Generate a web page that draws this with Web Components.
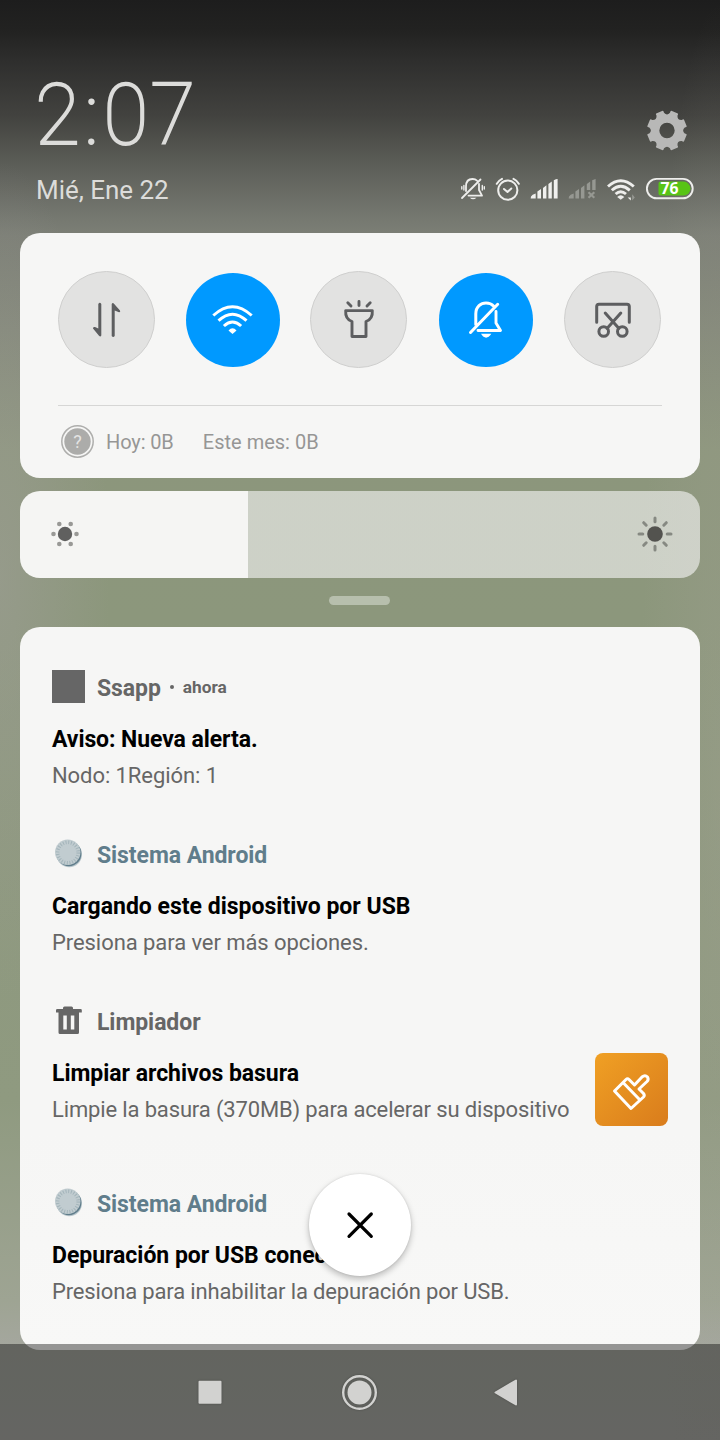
<!DOCTYPE html>
<html lang="es">
<head>
<meta charset="utf-8">
<title>Panel de notificaciones</title>
<style>
html,body{margin:0;padding:0;width:720px;height:1440px;overflow:hidden;font-family:Roboto,"Liberation Sans",sans-serif}
</style>
</head>
<body>
<phone-screen></phone-screen>
<script>
const define=(name,html)=>customElements.define(name,class extends HTMLElement{
  constructor(){super();const t=document.createElement('template');
    t.innerHTML='<style>*{box-sizing:border-box}svg{display:block;overflow:visible}</style>'+html;
    this.attachShadow({mode:'open'}).append(t.content.cloneNode(true));}
});

define('status-icons',`<style>:host{display:block;width:240px;height:28px}</style>
<svg width="240" height="28" viewBox="456 175 240 28" fill="none" stroke="#eeeeec" stroke-width="1.8" stroke-linecap="round" stroke-linejoin="round">
<path d="M462 198L480.500 179.500M466 191V186.500C466 181 469 179 472.500 179C474.500 179 476 179.600 477 180.600M479 184V190L482 195.600H468.500"/><path d="M469.800 197.700H476.500Q473 201 469.800 197.700Z" fill="#eeeeec" stroke="none"/>
<path d="M463.900 185.500V190M461.800 186.800V189M482.300 185.500V190M484.300 186.800V189" stroke-width="1.400"/>
<circle cx="507.800" cy="190.200" r="9.600" stroke-width="2"/><path d="M504 189L507.500 192L511.300 188.500" stroke-width="2"/><path d="M496.800 183.800Q499 180.200 502 178.800M513.500 178.800Q516.800 180.200 518.800 183.800" stroke-width="2"/>
<g stroke="none" fill="#f0f0ee"><path d="M531 196.500Q532 194.300 535.700 193.500V198.500H530.700ZM537.400 191.500L541 189V198.500H537.400ZM543 188L546.400 185.200V198.500H543ZM548.400 184L551.800 181.500V198.500H548.400ZM553.800 180.200Q556.500 178.800 557.600 179V198.500H553.800Z"/></g>
<g stroke="none" fill="#969892"><path d="M569 196.500Q570 194.300 573.700 193.500V198.500H568.700ZM575.400 191.500L579 189V198.500H575.400ZM581 188L584.400 185.200V198.500H581ZM586.800 184L590.200 181.500V190H586.800ZM592.200 180.200L595.600 179V190H592.200Z"/></g><path d="M588.500 192.300L594.300 197.800M594.300 192.300L588.500 197.800" stroke="#969892" stroke-width="2.200" stroke-linecap="butt"/>
<path d="M608 186.500Q620.700 174.800 633.800 186.500M611.800 190.300Q620.700 182.200 629.800 190.300M615.600 194Q620.700 189.300 626 194" stroke-width="2.900" stroke-linecap="butt"/><path d="M617.200 197Q620.700 193.500 624.300 197L620.700 199.800Z" fill="#eeeeec" stroke="none"/>
<path d="M630.800 194.300V200.500L627.700 197.500H630.800Z" fill="#eeeeec" stroke="none"/><path d="M632.200 194.300V200.500L634.800 197.500Z" fill="#969892" stroke="none"/>
<rect x="646.900" y="178.900" width="45.800" height="19.400" rx="9.700" stroke-width="1.900"/><path d="M660.500 181.600H683.500A6.900 6.900 0 0 1 683.500 195.500H660.500Q658.500 195.500 658.500 193.500V183.600Q658.500 181.600 660.500 181.600Z" fill="#58c416" stroke="none"/>
<text x="660.400" y="194.400" font-family="'Open Sans',sans-serif" font-size="16.500" font-weight="700" fill="#fff" stroke="none" textLength="18" lengthAdjust="spacingAndGlyphs">76</text>
</svg>`);

define('shade-header',`<style>:host{display:flex;justify-content:space-between;height:233px;padding:0 24px 0 36px;color:#dcdcda}
.l,.r{display:flex;flex-direction:column}.r{align-items:flex-end}
.time{margin:62px 0 0 -1px;height:106px;line-height:106px;font-size:86px;font-weight:100;white-space:nowrap;-webkit-text-stroke:2px #dcdcda;letter-spacing:2px;transform:scaleX(.957);transform-origin:left}
.time span{letter-spacing:4.500px}
.date{margin-top:7px;line-height:30px;font-size:26px;letter-spacing:-.03px;white-space:nowrap}
.gear{margin:110px 9.500px 0 0;height:65px}</style>
<div class="l"><div class="time"><span>2:</span>07</div><div class="date">Mié, Ene 22</div></div>
<div class="r"><div class="gear"><svg width="40" height="40" viewBox="-20 -20.500 40 40"><path id="g" fill="#b8b8b7" fill-rule="evenodd"/></svg></div><status-icons></status-icons></div>`);

define('quick-tile',`<style>:host{display:flex;flex:none;align-self:flex-start;width:97px;height:97px;border-radius:50%;background:#e2e2e1;border:1.500px solid #cfcfce;align-items:center;justify-content:center;color:#5d5e60}
:host([on]){background:#0099ff;border:0;width:94px;height:94px;align-self:center;color:#fff}</style><slot></slot>`);

define('tile-icon',`<style>:host{display:block;width:60px;height:60px}svg{display:none;fill:none;stroke:currentColor;stroke-width:3;stroke-linecap:round;stroke-linejoin:round}
:host([name=data]) .data,:host([name=wifi]) .wifi,:host([name=torch]) .torch,:host([name=mute]) .mute,:host([name=snip]) .snip{display:block}</style>
<svg class="data" width="60" height="60" viewBox="-30 -30 60 60"><path d="M-5.700 -16V15.500Q-6.500 17.200 -8 15.800L-14 8.500Q-14.300 6.500 -12 7L-8.700 8.500V-16Q-7.200 -18.500 -5.700 -16ZM4.700 16V-16Q5.700 -18 7.200 -16L13 -9.500Q13.800 -7.500 12 -7.700L7.700 -9.500V16Q6.200 18 4.700 16Z" fill="currentColor" stroke="none"/></svg>
<svg class="wifi" width="60" height="60" viewBox="-29.500 -30 60 60"><g style="stroke-linecap:butt;stroke-width:3"><path d="M-19.200 -4.500Q0 -22 19.200 -4.500M-14 .700Q0 -12.300 14 .700M-8.600 6Q0 -2 8.600 6"/></g><path d="M-4 10.500Q0 6 4 10.500L0 14Z" fill="currentColor" stroke="none"/></svg>
<svg class="torch" width="60" height="60" viewBox="-30 -30 60 60"><path d="M-13.300 -9.400H13.300Q14 -1 7 1.500V16.500H-7V1.500Q-14 -1 -13.300 -9.400ZM0 -18.500V-14.500M-11.200 -17.200L-8 -14M11.200 -17.200L8 -14" stroke-width="2.900"/></svg>
<svg class="mute" width="60" height="60" viewBox="-30 -30 60 60"><path d="M-15.500 12.500L11.700 -15.700M-10.200 4.500V-6C-10.200 -13.500 -5 -17 0 -17C3.500 -17 6 -15.700 7.500 -14"/><path d="M10 -8.500V3L14.500 10.500H-8" stroke-width="2.900"/><path d="M-5 13.800H5.300Q0 21.500 -5 13.800Z" fill="currentColor" stroke="none"/></svg>
<svg class="snip" width="60" height="60" viewBox="-30 -30 60 60"><path d="M-16.300 2.300V-13.500Q-16.300 -15.800 -14 -15.800H14Q16.300 -15.800 16.300 -13.500V2.300M-7.800 -7L6 8.500M7.800 -7L-6 8.500"/><circle cx="-9.300" cy="11.500" r="4.800"/><circle cx="9.300" cy="11.500" r="4.800"/></svg>`);

define('quick-panel',`<style>:host{display:block;height:245px;border-radius:20px;background:#f6f6f5;padding:38px 38px 0}
.tiles{display:flex;align-items:center;height:98px}
quick-tile{margin-right:31px}quick-tile:nth-child(2){margin-right:30px}quick-tile:nth-child(3){margin-right:32px}
.usage{display:flex;align-items:center;margin-top:36px;border-top:1px solid #d6d6d5;height:73px;font-size:20px;color:#969695;white-space:nowrap;padding-left:2px}
.q{margin:0 11px 2px 0}.h{margin-right:29.200px;letter-spacing:-.12px}</style>
<div class="tiles"><quick-tile><tile-icon name="data"></tile-icon></quick-tile><quick-tile on><tile-icon name="wifi"></tile-icon></quick-tile><quick-tile><tile-icon name="torch"></tile-icon></quick-tile><quick-tile on><tile-icon name="mute"></tile-icon></quick-tile><quick-tile><tile-icon name="snip"></tile-icon></quick-tile></div>
<div class="usage"><svg class="q" width="35" height="35" viewBox="0 0 35 35"><circle cx="17.500" cy="17.500" r="15.700" fill="none" stroke="#aeaeac" stroke-width="1.500"/><circle cx="17.500" cy="17.500" r="13.200" fill="#acacaa"/><text x="17.500" y="23.500" text-anchor="middle" font-size="18" font-weight="400" fill="#e4e4e3" font-family="Roboto,sans-serif">?</text></svg><span class="h">Hoy: 0B</span><span>Este mes: 0B</span></div>`);

define('brightness-slider',`<style>:host{display:flex;justify-content:space-between;align-items:center;height:87px;margin-top:13px;border-radius:20px;padding:0 27.500px 2px 29.700px;background:linear-gradient(90deg,#f5f5f3 228px,rgba(245,245,245,.62) 228px)}</style>
<svg width="30" height="30" viewBox="-15 -15 30 30"><circle r="7.200" fill="#60605f"/><g fill="#999996"><circle cx="-11.500" r="2.300"/><circle cx="11.500" r="2.300"/><circle cx="-5.700" cy="-10" r="2.300"/><circle cx="5.700" cy="-10" r="2.300"/><circle cx="-5.700" cy="10" r="2.300"/><circle cx="5.700" cy="10" r="2.300"/></g></svg>
<svg width="36" height="36" viewBox="-18 -18 36 36"><circle r="7.800" fill="#53534f"/><path d="M0-16V-12.200M0 12.200V16M-16 0H-12.200M12.200 0H16M-11.300-11.300L-8.800-8.800M11.300 11.300L8.800 8.800M-11.300 11.300L-8.800 8.800M11.300-11.300L8.800-8.800" stroke="#868982" stroke-width="3" stroke-linecap="round"/></svg>`);

define('drag-handle',`<style>:host{display:flex;height:49px;padding-top:18px;justify-content:center}i{display:block;width:61px;height:9px;border-radius:4.500px;background:#b7bfad;margin-right:1px}</style><i></i>`);

define('app-icon',`<style>:host{display:block;width:33px;height:33px}svg{display:none}:host([name=app]) .app,:host([name=android]) .android,:host([name=trash]) .trash{display:block}</style>
<svg class="app" width="33" height="33"><rect width="33" height="33" fill="#666"/></svg>
<svg class="android" width="33" height="33"><circle cx="17.300" cy="17.500" r="12.700" fill="#b9c7cc"/><circle cx="16.900" cy="16.700" r="12.500" fill="#607d8b"/><circle cx="15.700" cy="15.300" r="12.700" fill="#c1ccd0"/><circle cx="15.900" cy="15.600" r="10.300" fill="none" stroke="#a3b4ba" stroke-width="3.600" stroke-dasharray="1 1.697"/></svg>
<svg class="trash" width="33" height="33" viewBox="0 -.600 33 33"><path d="M4 5.500Q4 4.500 5.500 4.500H11V3.500Q11 2 12.500 2H19.500Q21 2 21 3.500V4.500H28.500Q29.800 4.500 29.800 5.500V7.800H27V28Q27 29.500 25.500 29.500H8Q6.500 29.500 6.500 28V7.800H4ZM11.300 11V25H14.800V11ZM18.800 11V25H22.300V11Z" fill="#666" fill-rule="evenodd"/></svg>`);

define('notification-item',`<style>:host{display:block;height:124px;margin-bottom:43px;color:#666;white-space:nowrap}
:host([tall]){margin-bottom:58px}
.head{display:flex;height:36px;align-items:flex-start;font-size:23px;line-height:38px;font-weight:700}
.name{margin-left:12px;letter-spacing:-.07px}:host([sys]) .name{color:#607d8b}
.body{display:flex;justify-content:space-between;margin-top:15px}
.t{font-size:23px;height:36px;line-height:38px;font-weight:700;color:#000;letter-spacing:var(--title-spacing,-.03px)}.d{font-size:22px;line-height:37px;letter-spacing:var(--text-spacing,-.07px)}
::slotted([slot=time]){font-size:17.300px;line-height:35px}</style>
<div class="head"><slot name="icon"></slot><span class="name"><slot name="app"></slot></span><slot name="time"></slot></div>
<div class="body"><div><div class="t"><slot name="title"></slot></div><div class="d"><slot></slot></div></div><slot name="action"></slot></div>`);

define('clean-button',`<style>:host{display:block;width:73px;height:73px;margin-top:-2px;border-radius:8px;background:linear-gradient(135deg,#f0a024,#d97c1c)}</style>
<svg width="73" height="73" fill="none" stroke="#fff" stroke-width="3" stroke-linejoin="round"><path d="M19.500 38L31 26.500Q32.500 25 34 26.500L39.500 32L47 24Q50 21.500 52.500 24Q54 26.500 52 28.500L44 36L48.500 40.500Q50 42.500 48.500 44L36 55.500ZM28 29.500L44.500 46.500"/></svg>`);

define('notification-list',`<style>:host{display:block;height:723px;border-radius:20px;background:linear-gradient(#f6f6f5 0,#f6f6f5 70%,#f8f8f7);padding:43px 32px 0}
notification-item:nth-of-type(1){--title-spacing:-.08px}notification-item:nth-of-type(2){--title-spacing:0}notification-item:nth-of-type(n+3){--text-spacing:-.145px}
.dot{display:inline-block;width:4px;height:4px;border-radius:2px;background:#666;margin:0 9px 4px;vertical-align:baseline}</style>
<notification-item><app-icon slot="icon" name="app"></app-icon><span slot="app">Ssapp</span><span slot="time"><span class="dot"></span>ahora</span><span slot="title">Aviso: Nueva alerta.</span>Nodo: 1Región: 1</notification-item>
<notification-item sys><app-icon slot="icon" name="android"></app-icon><span slot="app">Sistema Android</span><span slot="title">Cargando este dispositivo por USB</span>Presiona para ver más opciones.</notification-item>
<notification-item tall><app-icon slot="icon" name="trash"></app-icon><span slot="app">Limpiador</span><span slot="title">Limpiar archivos basura</span>Limpie la basura (370MB) para acelerar su dispositivo<clean-button slot="action"></clean-button></notification-item>
<notification-item sys><app-icon slot="icon" name="android"></app-icon><span slot="app">Sistema Android</span><span slot="title">Depuración por USB conectada</span>Presiona para inhabilitar la depuración por USB.</notification-item>`);

define('close-button',`<style>:host{position:absolute;left:309px;top:1174px;width:102px;height:102px;border-radius:50%;background:#fff;display:flex;align-items:center;justify-content:center;box-shadow:0 3px 6px rgba(0,0,0,.25),0 0 2px rgba(0,0,0,.12)}</style>
<svg width="26" height="26" viewBox="-13 -13 26 26"><path d="M-11-11L11.300 11.300M11.300-11L-11 11.300" stroke="#000" stroke-width="3.200" stroke-linecap="round"/></svg>`);

define('nav-bar',`<style>:host{position:absolute;left:0;bottom:0;width:720px;height:96px;background:rgba(0,0,0,.4);display:flex;align-items:center;padding:0 0 0 198px}
svg{filter:drop-shadow(0 0 1px rgba(0,0,0,.25))}svg+svg{margin-left:119px}svg+svg+svg{margin-left:117px}</style>
<svg width="24" height="24"><rect x=".500" y=".800" width="23" height="23" rx="1" fill="#d2d2d0"/></svg>
<svg width="36" height="36"><circle cx="18.500" cy="18.500" r="16.300" fill="none" stroke="#d2d2d0" stroke-width="2.400"/><circle cx="18.500" cy="18.500" r="12" fill="#d2d2d0"/></svg>
<svg width="24" height="28"><path d="M1.500 14.500L22 2.500V26.500Z" fill="#d2d2d0" stroke="#d2d2d0" stroke-width="2" stroke-linejoin="round"/></svg>`);

define('phone-screen',`<style>:host{display:flex;flex-direction:column;position:relative;width:720px;height:1440px;overflow:hidden;
background:radial-gradient(ellipse 110px 420px at 0 580px,rgba(164,160,160,.4),rgba(164,160,160,0)),radial-gradient(ellipse 80px 800px at 720px 800px,rgba(164,162,150,.3),rgba(164,162,150,0)),linear-gradient(#1d1d1d 0,#222221 30px,#2e2e2d 60px,#42423f 115px,#5c5e58 165px,#74776f 215px,#7c7f76 235px,#84897a 330px,#8c967c 450px,#8c977c 620px,#8f9a80 1100px,#9ea493 1300px,#a5a79f 1350px,#a8a9a4 1440px)}
main{padding:0 20px}</style>
<shade-header></shade-header><main><quick-panel></quick-panel><brightness-slider></brightness-slider><drag-handle></drag-handle><notification-list></notification-list></main><close-button></close-button><nav-bar></nav-bar>`);

/* Eight-toothed gear outline with a round hole. */
(()=>{const p=document.querySelector('phone-screen').shadowRoot.querySelector('shade-header').shadowRoot.getElementById('g');
let d='';
for(let i=0;i<8;i++){const c=22.5+i*45;const P=(a,r)=>{const t=(c+a)*Math.PI/180;return (r*Math.sin(t)).toFixed(2)+' '+(-r*Math.cos(t)).toFixed(2)};
d+=(i?'L':'M')+P(-13,18)+'Q'+P(-12.5,20.2)+' '+P(-10,20.2)+'L'+P(10,20.2)+'Q'+P(12.5,20.2)+' '+P(13,18)+'Q'+P(22.5,14.5)+' '+P(32,18);}
p.setAttribute('d',d+'ZM7.700 0A7.700 7.700 0 1 0 -7.700 0A7.700 7.700 0 1 0 7.700 0Z');})();
</script>
</body>
</html>
